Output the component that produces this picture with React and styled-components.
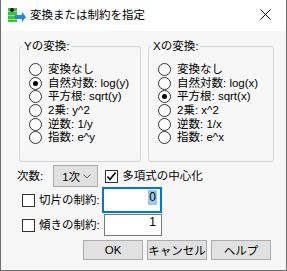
import styled, { createGlobalStyle } from 'styled-components';

const GlobalStyle = createGlobalStyle`
	html, body {
		margin: 0;
		padding: 0;
		background: #ffffff;
	}
	body {
		font-family: 'Liberation Sans', 'Noto Sans CJK JP', sans-serif;
		font-size: 11.5px;
		color: #000;
	}
`;

const yItems = ['変換なし', '自然対数: log(y)', '平方根: sqrt(y)', '2乗: y^2', '逆数: 1/y', '指数: e^y'];
const xItems = ['変換なし', '自然対数: log(x)', '平方根: sqrt(x)', '2乗: x^2', '逆数: 1/x', '指数: e^x'];

const AppIcon = () => (
	<svg width='18' height='16' viewBox='0 0 18 16'>
		<rect x='0' y='1' width='9' height='14' fill='#3cc13c' />
		<rect x='0' y='4' width='9' height='1' fill='#8ee08e' />
		<rect x='0' y='8' width='9' height='1' fill='#8ee08e' />
		<rect x='0' y='12' width='9' height='1' fill='#8ee08e' />
		<circle cx='4' cy='3' r='2' fill='#111' />
		<path d='M7 8 L14 8 L14 5 L18 10 L14 15 L14 12 L7 12 Z' fill='#1e88e5' />
	</svg>
);

const CloseIcon = () => (
	<svg width='11' height='11' viewBox='0 0 11 11'>
		<path d='M0.5 0.5 L10.5 10.5 M10.5 0.5 L0.5 10.5' stroke='#000' strokeWidth='1' />
	</svg>
);

const Chevron = () => (
	<svg width='8' height='5' viewBox='0 0 8 5'>
		<path d='M0.5 0.5 L4 4 L7.5 0.5' stroke='#666' strokeWidth='1' fill='none' />
	</svg>
);

const CheckMark = () => (
	<svg width='11' height='11' viewBox='0 0 11 11'>
		<path d='M1.5 5.5 L4 8.5 L9.5 1.5' stroke='#000' strokeWidth='1.6' fill='none' />
	</svg>
);

const Group = ({ title, items, selected, width }) => (
	<StyledFieldset $width={width}>
		<StyledLegend>{title}</StyledLegend>
		<StyledRadioList>
			{items.map((label, i) => (
				<StyledRadioRow key={label}>
					<StyledRadio $checked={i === selected} />
					<StyledRadioText>{label}</StyledRadioText>
				</StyledRadioRow>
			))}
		</StyledRadioList>
	</StyledFieldset>
);

const App = () => {
	return (
		<>
			<GlobalStyle />
			<StyledWindow>
				<StyledTitleBar>
					<StyledTitleLeft>
						<AppIcon />
						<StyledTitle>変換または制約を指定</StyledTitle>
					</StyledTitleLeft>
					<StyledClose>
						<CloseIcon />
					</StyledClose>
				</StyledTitleBar>

				<StyledBody>
					<StyledGroups>
						<Group title='Yの変換:' items={yItems} selected={1} width={122} />
						<Group title='Xの変換:' items={xItems} selected={2} width={126} />
					</StyledGroups>

					<StyledDegreeRow>
						<StyledLabel>次数:</StyledLabel>
						<StyledSelect>
							<span>1次</span>
							<Chevron />
						</StyledSelect>
						<StyledCheckbox $checked>
							<CheckMark />
						</StyledCheckbox>
						<StyledLabel>多項式の中心化</StyledLabel>
					</StyledDegreeRow>

					<StyledConstraintRow>
						<StyledCheckbox />
						<StyledConstraintLabel>切片の制約:</StyledConstraintLabel>
						<StyledInput $focused $width={60}>
							<StyledSelection>0</StyledSelection>
						</StyledInput>
					</StyledConstraintRow>
					<StyledConstraintRow>
						<StyledCheckbox />
						<StyledConstraintLabel>傾きの制約:</StyledConstraintLabel>
						<StyledInput $width={58}>1</StyledInput>
					</StyledConstraintRow>

					<StyledButtons>
						<StyledButton>OK</StyledButton>
						<StyledButton>キャンセル</StyledButton>
						<StyledButton>ヘルプ</StyledButton>
					</StyledButtons>
				</StyledBody>
			</StyledWindow>
		</>
	);
};

export default App;

const StyledWindow = styled.div`
	box-sizing: border-box;
	width: 287px;
	height: 271px;
	display: flex;
	flex-direction: column;
	border: 1px solid #6e6e6e;
	border-top: none;
	background: #f7f7f7;
	overflow: hidden;
`;
const StyledTitleBar = styled.div`
	height: 31px;
	flex: none;
	background: #ffffff;
	display: flex;
	align-items: center;
	justify-content: space-between;
	padding: 0 15px 0 7px;
`;
const StyledTitleLeft = styled.div`
	display: flex;
	align-items: center;
	gap: 4px;
	margin-top: -2px;
`;
const StyledTitle = styled.span`
	font-size: 11.5px;
	line-height: 16px;
`;
const StyledClose = styled.div`
	display: flex;
	margin-top: -2px;
`;
const StyledBody = styled.div`
	flex: 1;
	padding: 7px 0 0 0;
	display: flex;
	flex-direction: column;
`;
const StyledGroups = styled.div`
	display: flex;
	gap: 7px;
	padding-left: 18px;
`;
const StyledFieldset = styled.fieldset`
	box-sizing: border-box;
	width: ${({ $width }) => $width}px;
	height: 124px;
	margin: 0;
	padding: 0 0 0 2px;
	border: 1px solid #d4d4d4;
	border-radius: 3px;
`;
const StyledLegend = styled.legend`
	padding: 0 2px;
	font-size: 11.5px;
	line-height: 16px;
`;
const StyledRadioList = styled.div`
	display: flex;
	flex-direction: column;
	margin: 9px 0 0 7px;
`;
const StyledRadioRow = styled.div`
	display: flex;
	align-items: center;
	gap: 6px;
	height: 13.6px;
	white-space: nowrap;
`;
const StyledRadioText = styled.span`
	font-size: 11.5px;
	line-height: 13px;
	height: 13px;
`;
const StyledRadio = styled.span`
	box-sizing: border-box;
	flex: none;
	width: 13px;
	height: 13px;
	border-radius: 50%;
	border: 1px solid #333;
	background: #fff;
	display: flex;
	align-items: center;
	justify-content: center;

	&::after {
		content: '';
		width: 5px;
		height: 5px;
		border-radius: 50%;
		background: ${({ $checked }) => ($checked ? '#000' : 'transparent')};
	}
`;
const StyledDegreeRow = styled.div`
	display: flex;
	align-items: center;
	height: 22px;
	margin-top: 3px;
	padding-left: 16px;
`;
const StyledLabel = styled.span`
	font-size: 11.5px;
	line-height: 15px;
	white-space: nowrap;
`;
const StyledSelect = styled.div`
	box-sizing: border-box;
	width: 45px;
	height: 22px;
	margin: 0 7px 0 10px;
	padding: 0 6px 0 8px;
	display: flex;
	align-items: center;
	justify-content: space-between;
	background: #e1e1e1;
	border: 1px solid #adadad;
	font-size: 11.5px;
`;
const StyledCheckbox = styled.span`
	box-sizing: border-box;
	flex: none;
	width: 13px;
	height: 13px;
	border: 1px solid #333;
	background: #fff;
	display: flex;
	align-items: center;
	justify-content: center;
	margin-right: 4px;
`;
const StyledConstraintRow = styled.div`
	display: flex;
	align-items: center;
	padding-left: 21px;
	margin-top: 0;

	& + & {
		margin-top: 1px;
	}
`;
const StyledConstraintLabel = styled.span`
	width: 63px;
	white-space: nowrap;
	font-size: 11.5px;
	line-height: 15px;
`;
const StyledInput = styled.div`
	box-sizing: border-box;
	width: ${({ $width }) => $width}px;
	height: ${({ $focused }) => ($focused ? 26 : 22)}px;
	margin-left: ${({ $focused }) => ($focused ? 0 : 2)}px;
	background: #fff;
	border: ${({ $focused }) => ($focused ? '2px solid #0078d7' : '1px solid #7a7a7a')};
	display: flex;
	justify-content: flex-end;
	align-items: flex-start;
	padding: ${({ $focused }) => ($focused ? '1px 3px' : '0 5px')};
	font-size: 12px;
	line-height: 15px;
`;
const StyledSelection = styled.span`
	background: #99c9ef;
	padding: 0 1px;
`;
const StyledButtons = styled.div`
	display: flex;
	gap: 4px;
	padding-left: 82px;
	margin-top: 4px;
`;
const StyledButton = styled.div`
	box-sizing: border-box;
	width: 60px;
	height: 20px;
	display: flex;
	align-items: center;
	justify-content: center;
	background: #e1e1e1;
	border: 1px solid #adadad;
	font-size: 11.5px;
	white-space: nowrap;
`;
